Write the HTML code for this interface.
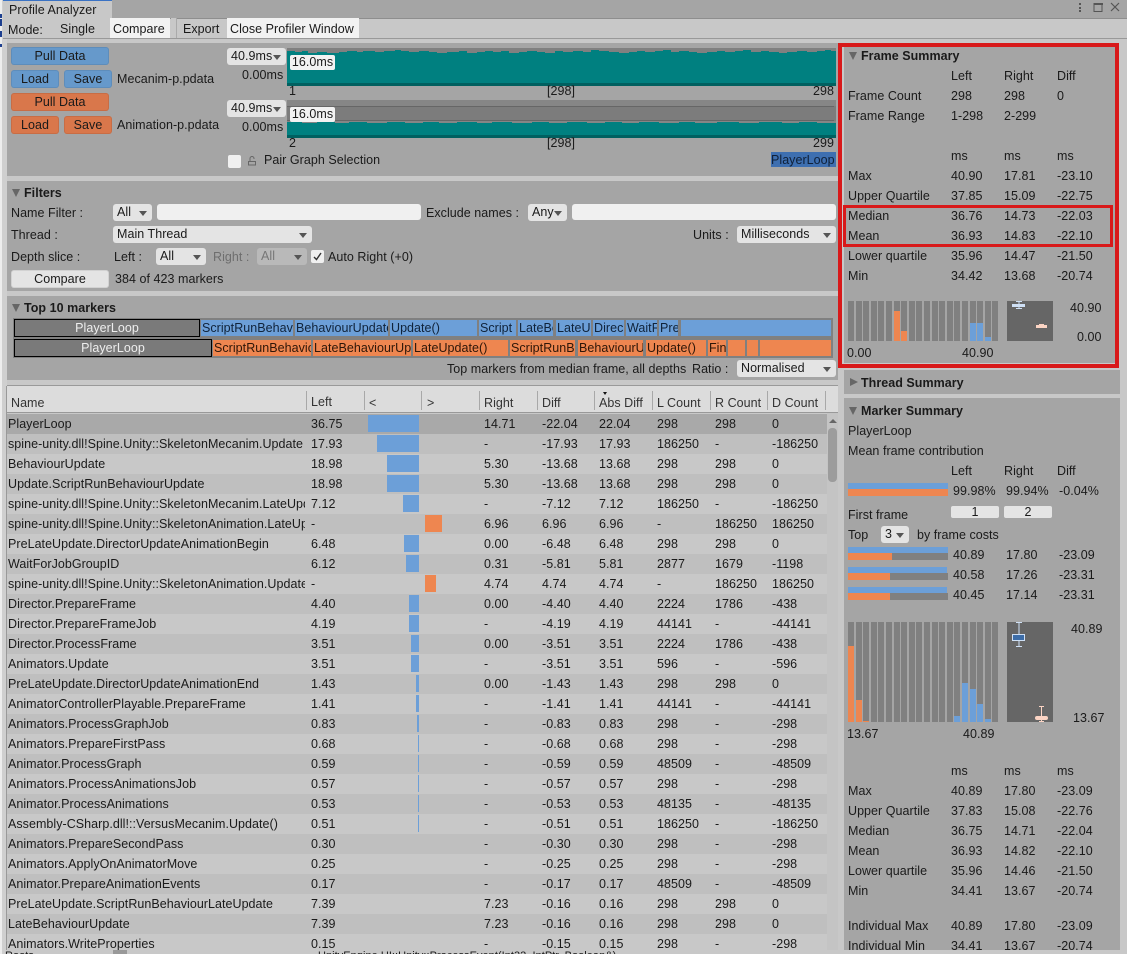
<!DOCTYPE html>
<html><head><meta charset="utf-8"><title>Profile Analyzer</title>
<style>
html{margin:0;padding:0;width:1127px;height:954px;overflow:hidden}
body{margin:0;padding:0;width:1127px;height:954px;position:relative;overflow:hidden;background:#c8c8c8;font:12.5px/20px "Liberation Sans",sans-serif;color:#1a1a1a;letter-spacing:.04px}
div,span,svg{position:absolute}
.t{white-space:nowrap;height:20px}
.p{background:#a5a5a5}
.b{border-radius:3px;text-align:center;height:18px;line-height:18px;box-shadow:inset 0 0 0 1px rgba(0,0,0,.08);white-space:nowrap}
.bl{background:#6699cb}.or{background:#d9774b}
.w{background:#e4e4e4}
.i{background:#f0f0f0;border-radius:3px;height:16px}
.dd{background:#e4e4e4;border-radius:3px;height:17px;line-height:17px;padding-left:4px;box-sizing:border-box;white-space:nowrap;overflow:hidden}
.dd:after{content:"";position:absolute;right:5px;top:7px;border:4px solid transparent;border-top:5px solid #555;border-bottom:0}
.tri{width:0;height:0;border-left:4.5px solid transparent;border-right:4.5px solid transparent;border-top:8px solid #666}
.h{font-weight:bold}
.s{overflow:hidden;height:18px;line-height:18px;white-space:nowrap;color:#10233a;padding-left:1px;box-sizing:border-box}
.sb{background:#6c9fd8}.so{background:#ee8650;color:#2e1608}
.pl{background:#7a7a7a;border:1px solid #000;box-sizing:border-box;color:#eee;text-align:center;height:18px;line-height:16px}
#tb{left:7px;top:386px;width:831px;height:564px;overflow:hidden;background:#c8c8c8}
.r{left:0;width:820px;height:20px}
.r:nth-child(even){background:#bfbfbf}
.r.sel{background:#a9a9a9}
.r span{white-space:nowrap;top:0;height:20px}
.r span:nth-child(1){left:1px;width:297px;overflow:hidden}
.r span:nth-child(2){left:304px}
.r span:nth-child(3){left:477px}
.r span:nth-child(4){left:535px}
.r span:nth-child(5){left:592px}
.r span:nth-child(6){left:650px}
.r span:nth-child(7){left:708px}
.r span:nth-child(8){left:765px}
.r i{position:absolute;top:1px;height:17px;display:block}
.r i.L{background:#6c9fd8}.r i.R{background:#ee8650}
.hd span{white-space:nowrap;color:#333}
.sep{width:1px;height:19px;top:5px;background:#a8a8a8}
.red{position:absolute;border:3px solid #d8191a;box-sizing:border-box}
.rows>span{white-space:nowrap;height:20px}
</style></head><body>

<div style="left:0;top:0;width:7px;height:954px;background:#ededed"></div>
<div style="left:0;top:14px;width:3px;height:4px;background:#1d3f8f"></div>
<div style="left:0;top:19px;width:3px;height:7px;background:#1d3f8f"></div>
<div style="left:0;top:31px;width:3px;height:6px;background:#1d3f8f"></div>
<div style="left:0;top:44px;width:3px;height:3px;background:#1d3f8f"></div>
<div style="left:2px;top:0;width:5px;height:954px;background:#cfcfcf"></div>
<div style="left:6px;top:386px;width:1px;height:564px;background:#999"></div>

<div style="left:3px;top:0;width:1124px;height:18px;background:#a5a5a5;border-bottom:1px solid #8e8e8e"></div>
<div style="left:3px;top:0;width:109px;height:19px;background:#c8c8c8;border-top:1px solid #3a72c4;box-sizing:border-box"></div>
<span class="t" style="left:9px;top:0">Profile Analyzer</span>
<svg style="left:1075px;top:0" width="52" height="16" viewBox="0 0 52 16"><g fill="#555"><rect x="4" y="3" width="2" height="2"/><rect x="4" y="7" width="2" height="2"/><rect x="4" y="10" width="2" height="2"/></g><rect x="19" y="3.5" width="8" height="8" fill="none" stroke="#555"/><rect x="19" y="3" width="9" height="2" fill="#555"/><path d="M36 3l8 8M44 3l-8 8" stroke="#555" stroke-width="1.2"/></svg>

<div style="left:3px;top:19px;width:1124px;height:19px;background:#c8c8c8;border-bottom:1px solid #999"></div>
<span class="t" style="left:8px;top:20px">Mode:</span>
<span class="t" style="left:60px;top:19px">Single</span>
<div style="left:110px;top:18px;width:60px;height:20px;background:#f2f2f2"></div>
<span class="t" style="left:113px;top:19px">Compare</span>
<div style="left:171px;top:18px;width:5px;height:20px;background:#c8c8c8;border-right:1px solid #aaa"></div>
<span class="t" style="left:183px;top:19px">Export</span>
<div style="left:227px;top:18px;width:132px;height:20px;background:#f2f2f2"></div>
<span class="t" style="left:230px;top:19px">Close Profiler Window</span>

<!-- Data panel -->
<div class="p" style="left:7px;top:43px;width:831px;height:133px"></div>
<div class="b bl" style="left:11px;top:47px;width:98px">Pull Data</div>
<div class="b bl" style="left:11px;top:70px;width:48px">Load</div>
<div class="b bl" style="left:64px;top:70px;width:48px">Save</div>
<span class="t" style="left:117px;top:69px">Mecanim-p.pdata</span>
<div class="b or" style="left:11px;top:93px;width:98px">Pull Data</div>
<div class="b or" style="left:11px;top:116px;width:48px">Load</div>
<div class="b or" style="left:64px;top:116px;width:48px">Save</div>
<span class="t" style="left:117px;top:115px">Animation-p.pdata</span>

<div class="dd" style="left:227px;top:48px;width:59px;background:#e4e4e4">40.9ms</div>
<span class="t" style="left:242px;top:65px">0.00ms</span>
<div class="dd" style="left:227px;top:100px;width:59px">40.9ms</div>
<span class="t" style="left:242px;top:117px">0.00ms</span>

<svg style="left:287px;top:48px" width="549" height="38" viewBox="0 0 549 38">
<rect width="549" height="38" fill="#808080"/>
<path fill="#008080" d="M0 3H8V4H15V3H21V5H30V4H40V5H52V4H60V3H70V4H76V3H88V4H97V3H108V2H114V3H122V4H132V3H142V4H150V5H160V4H172V3H180V5H190V4H198V3H206V4H214V3H222V5H232V4H240V3H250V4H258V5H268V3H276V4H286V3H296V4H304V2H312V3H322V4H332V5H342V4H350V3H358V4H368V3H376V2H384V4H392V3H402V4H410V5H420V4H430V3H438V4H448V3H456V2H464V4H474V3H482V4H492V5H500V4H510V3H520V4H530V3H538V2H544V3H549V35H0Z"/>
<rect y="35" width="549" height="3" fill="#006060"/>
</svg>
<svg style="left:287px;top:100px" width="549" height="38" viewBox="0 0 549 38">
<rect width="549" height="38" fill="#7c7c7c"/>
<rect y="0" width="549" height="6" fill="#868686"/>
<rect y="6" width="547" height="1" fill="#666"/>
<rect y="20" width="547" height="1" fill="#666"/>
<rect y="21" width="549" height="4" fill="#868686"/>
<path fill="#008080" d="M0 22H15V23H30V22H48V23H62V22H80V23H100V22H118V23H136V22H152V23H170V22H190V23H205V22H225V23H245V22H262V23H280V22H300V23H318V22H335V23H352V22H372V23H392V22H408V23H430V22H452V23H472V22H495V23H512V22H530V23H549V35H0Z"/>
<rect y="35" width="549" height="3" fill="#006060"/>
</svg>
<div style="left:290px;top:55px;width:45px;height:15px;background:#f2f2f2;border-radius:2px;line-height:15px;text-align:center">16.0ms</div>
<div style="left:290px;top:107px;width:45px;height:15px;background:#f2f2f2;border-radius:2px;line-height:15px;text-align:center">16.0ms</div>
<span class="t" style="left:289px;top:81px">1</span>
<span class="t" style="left:547px;top:81px">[298]</span>
<span class="t" style="left:813px;top:81px">298</span>
<span class="t" style="left:289px;top:133px">2</span>
<span class="t" style="left:547px;top:133px">[298]</span>
<span class="t" style="left:813px;top:133px">299</span>
<div style="left:228px;top:155px;width:13px;height:13px;background:#f0f0f0;border-radius:2px"></div>
<svg style="left:247px;top:154px" width="10" height="12" viewBox="0 0 10 12"><path d="M1.500 7.500h7v3.500h-7z" fill="none" stroke="#666"/><path d="M3 7V4.500a2 2 0 0 1 4 0V5" fill="none" stroke="#666"/></svg>
<span class="t" style="left:264px;top:150px">Pair Graph Selection</span>
<div style="left:771px;top:152px;width:65px;height:15px;background:#3e6fb0"></div>
<span class="t" style="left:771px;top:150px;color:#0f2038">PlayerLoop</span>

<!-- Filters -->
<div class="p" style="left:7px;top:181px;width:831px;height:110px"></div>
<div class="tri" style="left:12px;top:189px"></div>
<span class="t h" style="left:24px;top:183px">Filters</span>
<span class="t" style="left:11px;top:203px">Name Filter :</span>
<div class="dd" style="left:113px;top:204px;width:39px">All</div>
<div class="i" style="left:157px;top:204px;width:264px"></div>
<span class="t" style="left:426px;top:203px">Exclude names :</span>
<div class="dd" style="left:528px;top:204px;width:39px">Any</div>
<div class="i" style="left:572px;top:204px;width:264px"></div>
<span class="t" style="left:11px;top:225px">Thread :</span>
<div class="dd" style="left:113px;top:226px;width:199px">Main Thread</div>
<span class="t" style="left:693px;top:225px">Units :</span>
<div class="dd" style="left:737px;top:226px;width:99px">Milliseconds</div>
<span class="t" style="left:11px;top:247px">Depth slice :</span>
<span class="t" style="left:114px;top:247px">Left :</span>
<div class="dd" style="left:156px;top:248px;width:50px">All</div>
<span class="t" style="left:213px;top:247px;color:#6e6e6e">Right :</span>
<div class="dd" style="left:257px;top:248px;width:50px;background:#b9b9b9;color:#777">All</div>
<div style="left:311px;top:250px;width:13px;height:13px;background:#f0f0f0;border-radius:2px"></div>
<svg style="left:311px;top:250px" width="13" height="13" viewBox="0 0 13 13"><path d="M3 7l2.500 2.500L10 3" fill="none" stroke="#333" stroke-width="1.400"/></svg>
<span class="t" style="left:328px;top:247px">Auto Right (+0)</span>
<div class="b w" style="left:11px;top:270px;width:98px">Compare</div>
<span class="t" style="left:115px;top:269px">384 of 423 markers</span>

<!-- Top 10 -->
<div class="p" style="left:7px;top:296px;width:831px;height:84px"></div>
<div class="tri" style="left:12px;top:304px"></div>
<span class="t h" style="left:24px;top:298px">Top 10 markers</span>
<div style="left:13px;top:318px;width:820px;height:40px;background:#808080"></div>
<div class="pl" style="left:14px;top:319px;width:186px">PlayerLoop</div>
<div class="s sb" style="left:201px;top:320px;width:92px;height:16px;line-height:16px">ScriptRunBehaviourUpdate</div>
<div class="s sb" style="left:295px;top:320px;width:93px;height:16px;line-height:16px">BehaviourUpdate</div>
<div class="s sb" style="left:390px;top:320px;width:87px;height:16px;line-height:16px">Update()</div>
<div class="s sb" style="left:479px;top:320px;width:37px;height:16px;line-height:16px">Script</div>
<div class="s sb" style="left:518px;top:320px;width:35px;height:16px;line-height:16px">LateBe</div>
<div class="s sb" style="left:556px;top:320px;width:35px;height:16px;line-height:16px">LateU</div>
<div class="s sb" style="left:593px;top:320px;width:31px;height:16px;line-height:16px">Direc</div>
<div class="s sb" style="left:626px;top:320px;width:31px;height:16px;line-height:16px">WaitFor</div>
<div class="s sb" style="left:659px;top:320px;width:19px;height:16px;line-height:16px">Pre</div>
<div class="s sb" style="left:681px;top:320px;width:150px;height:16px"></div>
<div class="pl" style="left:14px;top:339px;width:198px">PlayerLoop</div>
<div class="s so" style="left:213px;top:340px;width:98px;height:16px;line-height:16px">ScriptRunBehaviour</div>
<div class="s so" style="left:313px;top:340px;width:98px;height:16px;line-height:16px">LateBehaviourUpdate</div>
<div class="s so" style="left:413px;top:340px;width:95px;height:16px;line-height:16px">LateUpdate()</div>
<div class="s so" style="left:510px;top:340px;width:65px;height:16px;line-height:16px">ScriptRunBe</div>
<div class="s so" style="left:578px;top:340px;width:65px;height:16px;line-height:16px">BehaviourU</div>
<div class="s so" style="left:646px;top:340px;width:60px;height:16px;line-height:16px">Update()</div>
<div class="s so" style="left:708px;top:340px;width:18px;height:16px;line-height:16px">Fin</div>
<div class="s so" style="left:728px;top:340px;width:17px;height:16px"></div>
<div class="s so" style="left:747px;top:340px;width:11px;height:16px"></div>
<div class="s so" style="left:760px;top:340px;width:71px;height:16px"></div>
<span class="t" style="left:447px;top:359px">Top markers from median frame, all depths</span>
<span class="t" style="left:692px;top:359px">Ratio :</span>
<div class="dd" style="left:737px;top:360px;width:99px">Normalised</div>

<!-- Bottom strip behind the window, clipped to the last 4px -->
<div style="left:0;top:950px;width:1127px;height:4px;overflow:hidden">
<span class="t" style="left:5px;top:-4px;font-size:11px">Roots</span>
<span class="t" style="left:318px;top:-4px;font-size:11px">UnityEngine.UI::Unity::ProcessEvent(Int32, IntPtr, Boolean&amp;)</span>
<div style="left:113px;top:0;width:14px;height:4px;background:#999"></div>
</div>

<!-- Table -->
<div style="left:7px;top:385px;width:831px;height:1px;background:#999"></div>
<div id="tb">
<div class="hd" style="left:0;top:0;width:831px;height:27px;background:#dcdcdc;border-bottom:1px solid #999;box-sizing:border-box">
<span style="left:4px;top:7px">Name</span><span style="left:304px;top:6px">Left</span><span style="left:362px;top:7px">&lt;</span><span style="left:420px;top:7px">&gt;</span><span style="left:477px;top:7px">Right</span><span style="left:535px;top:7px">Diff</span><span style="left:592px;top:7px">Abs Diff</span><span style="left:650px;top:7px">L Count</span><span style="left:708px;top:7px">R Count</span><span style="left:765px;top:7px">D Count</span>
<div class="sep" style="left:299px"></div><div class="sep" style="left:357px"></div><div class="sep" style="left:414px"></div><div class="sep" style="left:472px"></div><div class="sep" style="left:530px"></div><div class="sep" style="left:587px"></div><div class="sep" style="left:645px"></div><div class="sep" style="left:703px"></div><div class="sep" style="left:760px"></div><div class="sep" style="left:818px"></div>
<div style="left:596px;top:6px;border:2.500px solid transparent;border-top:3px solid #111;border-bottom:0"></div>
</div>
<div style="left:0;top:28px;width:820px;height:536px">
<div class="r sel" style="top:0"><span>PlayerLoop</span><span>36.75</span><span>14.71</span><span>-22.04</span><span>22.04</span><span>298</span><span>298</span><span>0</span><i class="L" style="left:361px;width:51px"></i></div>
<div class="r" style="top:20px"><span>spine-unity.dll!Spine.Unity::SkeletonMecanim.Update</span><span>17.93</span><span>-</span><span>-17.93</span><span>17.93</span><span>186250</span><span>-</span><span>-186250</span><i class="L" style="left:370px;width:42px"></i></div>
<div class="r" style="top:40px"><span>BehaviourUpdate</span><span>18.98</span><span>5.30</span><span>-13.68</span><span>13.68</span><span>298</span><span>298</span><span>0</span><i class="L" style="left:380px;width:32px"></i></div>
<div class="r" style="top:60px"><span>Update.ScriptRunBehaviourUpdate</span><span>18.98</span><span>5.30</span><span>-13.68</span><span>13.68</span><span>298</span><span>298</span><span>0</span><i class="L" style="left:380px;width:32px"></i></div>
<div class="r" style="top:80px"><span>spine-unity.dll!Spine.Unity::SkeletonMecanim.LateUpdate</span><span>7.12</span><span>-</span><span>-7.12</span><span>7.12</span><span>186250</span><span>-</span><span>-186250</span><i class="L" style="left:396px;width:16px"></i></div>
<div class="r" style="top:100px"><span>spine-unity.dll!Spine.Unity::SkeletonAnimation.LateUpdate</span><span>-</span><span>6.96</span><span>6.96</span><span>6.96</span><span>-</span><span>186250</span><span>186250</span><i class="R" style="left:418px;width:17px"></i></div>
<div class="r" style="top:120px"><span>PreLateUpdate.DirectorUpdateAnimationBegin</span><span>6.48</span><span>0.00</span><span>-6.48</span><span>6.48</span><span>298</span><span>298</span><span>0</span><i class="L" style="left:397px;width:15px"></i></div>
<div class="r" style="top:140px"><span>WaitForJobGroupID</span><span>6.12</span><span>0.31</span><span>-5.81</span><span>5.81</span><span>2877</span><span>1679</span><span>-1198</span><i class="L" style="left:399px;width:13px"></i></div>
<div class="r" style="top:160px"><span>spine-unity.dll!Spine.Unity::SkeletonAnimation.Update</span><span>-</span><span>4.74</span><span>4.74</span><span>4.74</span><span>-</span><span>186250</span><span>186250</span><i class="R" style="left:418px;width:11px"></i></div>
<div class="r" style="top:180px"><span>Director.PrepareFrame</span><span>4.40</span><span>0.00</span><span>-4.40</span><span>4.40</span><span>2224</span><span>1786</span><span>-438</span><i class="L" style="left:402px;width:10px"></i></div>
<div class="r" style="top:200px"><span>Director.PrepareFrameJob</span><span>4.19</span><span>-</span><span>-4.19</span><span>4.19</span><span>44141</span><span>-</span><span>-44141</span><i class="L" style="left:402px;width:10px"></i></div>
<div class="r" style="top:220px"><span>Director.ProcessFrame</span><span>3.51</span><span>0.00</span><span>-3.51</span><span>3.51</span><span>2224</span><span>1786</span><span>-438</span><i class="L" style="left:404px;width:8px"></i></div>
<div class="r" style="top:240px"><span>Animators.Update</span><span>3.51</span><span>-</span><span>-3.51</span><span>3.51</span><span>596</span><span>-</span><span>-596</span><i class="L" style="left:404px;width:8px"></i></div>
<div class="r" style="top:260px"><span>PreLateUpdate.DirectorUpdateAnimationEnd</span><span>1.43</span><span>0.00</span><span>-1.43</span><span>1.43</span><span>298</span><span>298</span><span>0</span><i class="L" style="left:409px;width:3px"></i></div>
<div class="r" style="top:280px"><span>AnimatorControllerPlayable.PrepareFrame</span><span>1.41</span><span>-</span><span>-1.41</span><span>1.41</span><span>44141</span><span>-</span><span>-44141</span><i class="L" style="left:409px;width:3px"></i></div>
<div class="r" style="top:300px"><span>Animators.ProcessGraphJob</span><span>0.83</span><span>-</span><span>-0.83</span><span>0.83</span><span>298</span><span>-</span><span>-298</span><i class="L" style="left:410px;width:2px"></i></div>
<div class="r" style="top:320px"><span>Animators.PrepareFirstPass</span><span>0.68</span><span>-</span><span>-0.68</span><span>0.68</span><span>298</span><span>-</span><span>-298</span><i class="L" style="left:411px;width:1px"></i></div>
<div class="r" style="top:340px"><span>Animator.ProcessGraph</span><span>0.59</span><span>-</span><span>-0.59</span><span>0.59</span><span>48509</span><span>-</span><span>-48509</span><i class="L" style="left:411px;width:1px"></i></div>
<div class="r" style="top:360px"><span>Animators.ProcessAnimationsJob</span><span>0.57</span><span>-</span><span>-0.57</span><span>0.57</span><span>298</span><span>-</span><span>-298</span><i class="L" style="left:411px;width:1px"></i></div>
<div class="r" style="top:380px"><span>Animator.ProcessAnimations</span><span>0.53</span><span>-</span><span>-0.53</span><span>0.53</span><span>48135</span><span>-</span><span>-48135</span><i class="L" style="left:411px;width:1px"></i></div>
<div class="r" style="top:400px"><span>Assembly-CSharp.dll!::VersusMecanim.Update()</span><span>0.51</span><span>-</span><span>-0.51</span><span>0.51</span><span>186250</span><span>-</span><span>-186250</span><i class="L" style="left:411px;width:1px"></i></div>
<div class="r" style="top:420px"><span>Animators.PrepareSecondPass</span><span>0.30</span><span>-</span><span>-0.30</span><span>0.30</span><span>298</span><span>-</span><span>-298</span></div>
<div class="r" style="top:440px"><span>Animators.ApplyOnAnimatorMove</span><span>0.25</span><span>-</span><span>-0.25</span><span>0.25</span><span>298</span><span>-</span><span>-298</span></div>
<div class="r" style="top:460px"><span>Animator.PrepareAnimationEvents</span><span>0.17</span><span>-</span><span>-0.17</span><span>0.17</span><span>48509</span><span>-</span><span>-48509</span></div>
<div class="r" style="top:480px"><span>PreLateUpdate.ScriptRunBehaviourLateUpdate</span><span>7.39</span><span>7.23</span><span>-0.16</span><span>0.16</span><span>298</span><span>298</span><span>0</span></div>
<div class="r" style="top:500px"><span>LateBehaviourUpdate</span><span>7.39</span><span>7.23</span><span>-0.16</span><span>0.16</span><span>298</span><span>298</span><span>0</span></div>
<div class="r" style="top:520px"><span>Animators.WriteProperties</span><span>0.15</span><span>-</span><span>-0.15</span><span>0.15</span><span>298</span><span>-</span><span>-298</span></div>
</div>
<div style="left:820px;top:27px;width:11px;height:537px;background:#c4c4c4"></div>
<div style="left:822px;top:33px;border:4px solid transparent;border-bottom:4px solid #666;border-top:0"></div>
<div style="left:821px;top:42px;width:9px;height:54px;background:#9c9c9c;border-radius:4px"></div>
</div>

<!-- Right: frame summary -->
<div class="p" style="left:844px;top:47px;width:272px;height:316px"></div>
<div class="tri" style="left:849px;top:52px"></div>
<span class="t h" style="left:861px;top:46px">Frame Summary</span>
<div class="rows">
<span class="t" style="left:951px;top:66px">Left</span><span class="t" style="left:1004px;top:66px">Right</span><span class="t" style="left:1057px;top:66px">Diff</span>
<span class="t" style="left:848px;top:86px">Frame Count</span><span class="t" style="left:951px;top:86px">298</span><span class="t" style="left:1004px;top:86px">298</span><span class="t" style="left:1057px;top:86px">0</span>
<span class="t" style="left:848px;top:106px">Frame Range</span><span class="t" style="left:951px;top:106px">1-298</span><span class="t" style="left:1004px;top:106px">2-299</span>
<span class="t" style="left:951px;top:146px">ms</span><span class="t" style="left:1004px;top:146px">ms</span><span class="t" style="left:1057px;top:146px">ms</span>
<span class="t" style="left:848px;top:166px">Max</span><span class="t" style="left:951px;top:166px">40.90</span><span class="t" style="left:1004px;top:166px">17.81</span><span class="t" style="left:1057px;top:166px">-23.10</span>
<span class="t" style="left:848px;top:186px">Upper Quartile</span><span class="t" style="left:951px;top:186px">37.85</span><span class="t" style="left:1004px;top:186px">15.09</span><span class="t" style="left:1057px;top:186px">-22.75</span>
<span class="t" style="left:848px;top:206px">Median</span><span class="t" style="left:951px;top:206px">36.76</span><span class="t" style="left:1004px;top:206px">14.73</span><span class="t" style="left:1057px;top:206px">-22.03</span>
<span class="t" style="left:848px;top:226px">Mean</span><span class="t" style="left:951px;top:226px">36.93</span><span class="t" style="left:1004px;top:226px">14.83</span><span class="t" style="left:1057px;top:226px">-22.10</span>
<span class="t" style="left:848px;top:246px">Lower quartile</span><span class="t" style="left:951px;top:246px">35.96</span><span class="t" style="left:1004px;top:246px">14.47</span><span class="t" style="left:1057px;top:246px">-21.50</span>
<span class="t" style="left:848px;top:266px">Min</span><span class="t" style="left:951px;top:266px">34.42</span><span class="t" style="left:1004px;top:266px">13.68</span><span class="t" style="left:1057px;top:266px">-20.74</span>
</div>
<svg style="left:848px;top:301px" width="206" height="40" viewBox="0 0 206 40">
<g fill="#808080"><rect x="0" width="6" height="40"/><rect x="8" width="6" height="40"/><rect x="15" width="6" height="40"/><rect x="23" width="6" height="40"/><rect x="30" width="6" height="40"/><rect x="38" width="6" height="40"/><rect x="46" width="6" height="40"/><rect x="53" width="6" height="40"/><rect x="61" width="6" height="40"/><rect x="68" width="6" height="40"/><rect x="76" width="6" height="40"/><rect x="84" width="6" height="40"/><rect x="91" width="6" height="40"/><rect x="99" width="6" height="40"/><rect x="106" width="6" height="40"/><rect x="114" width="6" height="40"/><rect x="122" width="6" height="40"/><rect x="129" width="6" height="40"/><rect x="137" width="6" height="40"/><rect x="144" width="6" height="40"/></g>
<rect x="46" y="10" width="6" height="30" fill="#ee8650"/><rect x="53" y="30" width="6" height="10" fill="#ee8650"/>
<rect x="122" y="22" width="6" height="18" fill="#6c9fd8"/><rect x="129" y="22" width="6" height="18" fill="#6c9fd8"/><rect x="137" y="36" width="6" height="4" fill="#6c9fd8"/>
<rect x="159" width="46" height="40" fill="#666"/>
<rect x="168" y="0" width="6" height="1" fill="#cfe0f5"/><rect x="168" y="7" width="6" height="1" fill="#cfe0f5"/><rect x="170.500" y="0" width="1" height="8" fill="#cfe0f5"/>
<rect x="164" y="3" width="13" height="3" fill="#cfe0f5"/>
<rect x="188" y="24" width="11" height="3" fill="#fbd4c4"/><rect x="191" y="23" width="5" height="1" fill="#fbd4c4"/>
</svg>
<span class="t" style="left:1070px;top:298px">40.90</span>
<span class="t" style="left:1077px;top:327px">0.00</span>
<span class="t" style="left:847px;top:343px">0.00</span>
<span class="t" style="left:962px;top:343px">40.90</span>
<div class="red" style="left:838px;top:43px;width:281px;height:325px;border-width:4px"></div>
<div class="red" style="left:843px;top:205px;width:270px;height:42px"></div>

<!-- Thread summary -->
<div class="p" style="left:844px;top:370px;width:276px;height:24px"></div>
<div style="left:850px;top:378px;width:0;height:0;border-top:4.500px solid transparent;border-bottom:4.500px solid transparent;border-left:8px solid #666"></div>
<span class="t h" style="left:861px;top:373px">Thread Summary</span>

<!-- Marker summary -->
<div class="p" style="left:844px;top:398px;width:276px;height:552px"></div>
<div class="tri" style="left:849px;top:407px"></div>
<span class="t h" style="left:861px;top:401px">Marker Summary</span>
<div class="rows">
<span class="t" style="left:848px;top:421px">PlayerLoop</span>
<span class="t" style="left:848px;top:441px">Mean frame contribution</span>
<span class="t" style="left:951px;top:461px">Left</span><span class="t" style="left:1004px;top:461px">Right</span><span class="t" style="left:1057px;top:461px">Diff</span>
</div>
<div style="left:848px;top:483px;width:100px;height:6px;background:#6c9fd8"></div>
<div style="left:848px;top:489px;width:100px;height:7px;background:#ee8650"></div>
<span class="t" style="left:953px;top:481px">99.98%</span><span class="t" style="left:1006px;top:481px">99.94%</span><span class="t" style="left:1059px;top:481px">-0.04%</span>
<span class="t" style="left:848px;top:505px">First frame</span>
<div class="w" style="left:951px;top:506px;width:48px;height:12px;line-height:12px;text-align:center;border-radius:2px">1</div>
<div class="w" style="left:1004px;top:506px;width:48px;height:12px;line-height:12px;text-align:center;border-radius:2px">2</div>
<span class="t" style="left:848px;top:525px">Top</span>
<div class="dd" style="left:881px;top:526px;width:28px">3</div>
<span class="t" style="left:917px;top:525px">by frame costs</span>
<div style="left:848px;top:547px;width:100px;height:6px;background:#6c9fd8"></div><div style="left:848px;top:553px;width:100px;height:7px;background:#808080"></div><div style="left:848px;top:553px;width:44px;height:7px;background:#ee8650"></div>
<div style="left:848px;top:567px;width:99px;height:6px;background:#6c9fd8"></div><div style="left:848px;top:573px;width:100px;height:7px;background:#808080"></div><div style="left:848px;top:573px;width:42px;height:7px;background:#ee8650"></div>
<div style="left:848px;top:587px;width:99px;height:6px;background:#6c9fd8"></div><div style="left:848px;top:593px;width:100px;height:7px;background:#808080"></div><div style="left:848px;top:593px;width:42px;height:7px;background:#ee8650"></div>
<div class="rows">
<span class="t" style="left:953px;top:545px">40.89</span><span class="t" style="left:1006px;top:545px">17.80</span><span class="t" style="left:1059px;top:545px">-23.09</span>
<span class="t" style="left:953px;top:565px">40.58</span><span class="t" style="left:1006px;top:565px">17.26</span><span class="t" style="left:1059px;top:565px">-23.31</span>
<span class="t" style="left:953px;top:585px">40.45</span><span class="t" style="left:1006px;top:585px">17.14</span><span class="t" style="left:1059px;top:585px">-23.31</span>
</div>
<svg style="left:848px;top:622px" width="206" height="100" viewBox="0 0 206 100">
<g fill="#808080"><rect x="0" width="6" height="100"/><rect x="8" width="6" height="100"/><rect x="15" width="6" height="100"/><rect x="23" width="6" height="100"/><rect x="30" width="6" height="100"/><rect x="38" width="6" height="100"/><rect x="46" width="6" height="100"/><rect x="53" width="6" height="100"/><rect x="61" width="6" height="100"/><rect x="68" width="6" height="100"/><rect x="76" width="6" height="100"/><rect x="84" width="6" height="100"/><rect x="91" width="6" height="100"/><rect x="99" width="6" height="100"/><rect x="106" width="6" height="100"/><rect x="114" width="6" height="100"/><rect x="122" width="6" height="100"/><rect x="129" width="6" height="100"/><rect x="137" width="6" height="100"/><rect x="144" width="6" height="100"/></g>
<rect x="0" y="24" width="6" height="76" fill="#ee8650"/><rect x="8" y="78" width="6" height="22" fill="#ee8650"/><rect x="15" y="99" width="6" height="1" fill="#ee8650"/>
<rect x="106" y="94" width="6" height="6" fill="#6c9fd8"/><rect x="114" y="61" width="6" height="39" fill="#6c9fd8"/><rect x="122" y="67" width="6" height="33" fill="#6c9fd8"/><rect x="129" y="82" width="6" height="18" fill="#6c9fd8"/><rect x="137" y="97" width="6" height="3" fill="#6c9fd8"/>
<rect x="159" width="46" height="100" fill="#666"/>
<path d="M168 .5h6M171 .5v24M168 24.500h6" stroke="#cfe0f5" fill="none"/>
<rect x="164.500" y="12.500" width="12" height="6" fill="#3d6da8" stroke="#cfe0f5"/>
<path d="M191 84.500h5M193.500 84.500v15M191 99.500h5" stroke="#fbd4c4" fill="none"/>
<rect x="187" y="94" width="13" height="4" rx="2" fill="#fbd4c4"/>
</svg>
<span class="t" style="left:1071px;top:619px">40.89</span>
<span class="t" style="left:1073px;top:708px">13.67</span>
<span class="t" style="left:847px;top:724px">13.67</span>
<span class="t" style="left:963px;top:724px">40.89</span>
<div class="rows">
<span class="t" style="left:951px;top:761px">ms</span><span class="t" style="left:1004px;top:761px">ms</span><span class="t" style="left:1057px;top:761px">ms</span>
<span class="t" style="left:848px;top:781px">Max</span><span class="t" style="left:951px;top:781px">40.89</span><span class="t" style="left:1004px;top:781px">17.80</span><span class="t" style="left:1057px;top:781px">-23.09</span>
<span class="t" style="left:848px;top:801px">Upper Quartile</span><span class="t" style="left:951px;top:801px">37.83</span><span class="t" style="left:1004px;top:801px">15.08</span><span class="t" style="left:1057px;top:801px">-22.76</span>
<span class="t" style="left:848px;top:821px">Median</span><span class="t" style="left:951px;top:821px">36.75</span><span class="t" style="left:1004px;top:821px">14.71</span><span class="t" style="left:1057px;top:821px">-22.04</span>
<span class="t" style="left:848px;top:841px">Mean</span><span class="t" style="left:951px;top:841px">36.93</span><span class="t" style="left:1004px;top:841px">14.82</span><span class="t" style="left:1057px;top:841px">-22.10</span>
<span class="t" style="left:848px;top:861px">Lower quartile</span><span class="t" style="left:951px;top:861px">35.96</span><span class="t" style="left:1004px;top:861px">14.46</span><span class="t" style="left:1057px;top:861px">-21.50</span>
<span class="t" style="left:848px;top:881px">Min</span><span class="t" style="left:951px;top:881px">34.41</span><span class="t" style="left:1004px;top:881px">13.67</span><span class="t" style="left:1057px;top:881px">-20.74</span>
<span class="t" style="left:848px;top:916px">Individual Max</span><span class="t" style="left:951px;top:916px">40.89</span><span class="t" style="left:1004px;top:916px">17.80</span><span class="t" style="left:1057px;top:916px">-23.09</span>
</div>
<div style="left:844px;top:936px;width:276px;height:14px;overflow:hidden">
<span class="t" style="left:4px;top:0">Individual Min</span><span class="t" style="left:107px;top:0">34.41</span><span class="t" style="left:160px;top:0">13.67</span><span class="t" style="left:213px;top:0">-20.74</span>
</div>
</body></html>
